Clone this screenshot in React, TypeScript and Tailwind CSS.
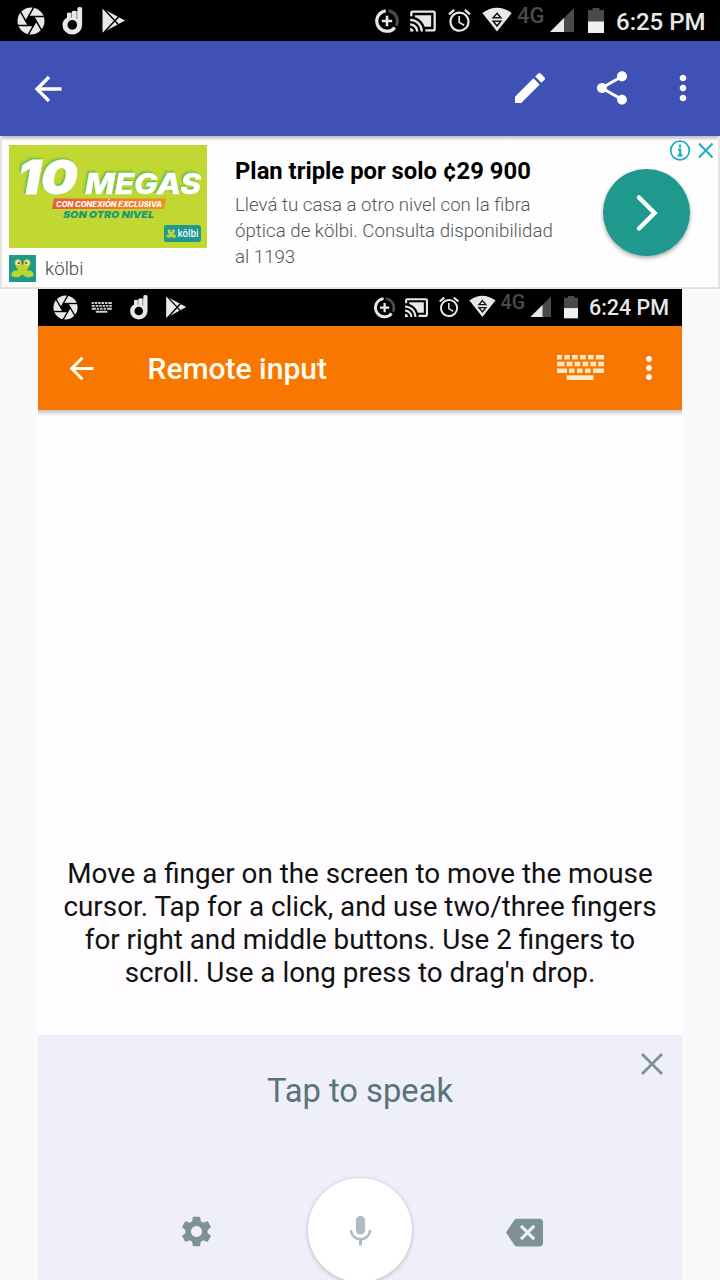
import React from "react";
import {
  MdAlarm,
  MdBackspace,
  MdCastConnected,
  MdEdit,
  MdMic,
  MdMoreVert,
  MdSettings,
  MdShare,
} from "react-icons/md";

const BLADE_ANGLES = [0, 60, 120, 180, 240, 300];

function ApertureIcon() {
  return (
    <svg width="28" height="28" viewBox="-14 -14 28 28">
      <circle r="13.500" fill="#e8e8e8" />
      <path d="M-2.600 -4.500H2.600L5.200 0L2.600 4.500H-2.600L-5.200 0Z" fill="#000" />
      {BLADE_ANGLES.map((angle) => (
        <path key={angle} d="M-2.600 -4.500H14" stroke="#000" strokeWidth="1.500" transform={`rotate(${angle})`} />
      ))}
    </svg>
  );
}

function HandIcon() {
  return (
    <svg width="28" height="28" viewBox="0 0 28 28">
      <path
        d="M4.500 18A9.800 9.500 0 0 0 24.100 18V0.800Q21.700 -0.600 19.400 0.800V4.500Q16 2.800 13.800 4.500V6Q11 4.800 9 6V10.500Q4.500 13 4.500 18Z"
        fill="#e8e8e8"
      />
      <path d="M13.500 6V11M18.800 4V12" stroke="#8a8a8a" strokeWidth="1.100" />
      <circle cx="14.300" cy="17.900" r="4.800" fill="#000" />
    </svg>
  );
}

function PlayIcon() {
  return (
    <svg width="28" height="28" viewBox="0 0 28 28">
      <path d="M3.5 1.500L26 13.500L3.5 25.800Z" fill="#e8e8e8" />
      <path d="M4 1L19.8 18M4 26.5L19.8 9.5" stroke="#000" strokeWidth="1.5" />
    </svg>
  );
}

function KeyboardIcon({ width, height, color }: { width: number; height: number; color: string }) {
  return (
    <svg width={width} height={height} viewBox="0 0 47 25" fill={color}>
      <path d="M0 0h5v4.6H0zM7.3 0h5.6v4.6H7.3zM15 0h5.8v4.6H15zM23 0h5.8v4.6H23zM31 0h5.6v4.6H31zM38.8 0H47v4.6h-8.2z" />
      <path d="M0 6.8h7.5v4.5H0zM9.6 6.8h5.8v4.5H9.6zM17.5 6.8h5.8v4.5h-5.8zM25.5 6.8h5.8v4.5h-5.8zM33.4 6.8h5.8v4.5h-5.8zM41.3 6.8H47v4.5h-5.7z" />
      <path d="M0 13.5h10v4.5H0zM12 13.5h5.5v4.5H12zM20 13.5h5.5v4.5H20zM28 13.5h5.5v4.5H28zM36 13.5h11v4.5H36zM9.6 20.3h27v4.7h-27z" />
    </svg>
  );
}

function DataSaverIcon() {
  return (
    <svg width="26" height="26" viewBox="0 0 26 26" fill="none">
      <path d="M14.5 2.9A10.2 10.2 0 0 1 22.2 17.6" stroke="#4a4a4a" strokeWidth="3.2" />
      <path d="M11.8 2.9A10.2 10.2 0 1 0 20.8 19.6" stroke="#e8e8e8" strokeWidth="3.2" />
      <path d="M13 7.8v10.4M7.8 13h10.4" stroke="#e8e8e8" strokeWidth="2.6" />
    </svg>
  );
}

function WifiIcon() {
  return (
    <svg width="30" height="26" viewBox="0 0 30 26">
      <path d="M0.3 6Q15 -4.5 29.7 6L15 24.5Z" fill="#e8e8e8" />
      <path d="M15 6.3l3.8 4.4h-7.6zM15 19l3.8-4.8h-7.6z" fill="none" stroke="#111" strokeWidth="1.5" />
    </svg>
  );
}

function SignalIcon() {
  return (
    <svg width="24" height="24" viewBox="0 0 24 24">
      <path d="M24 0V24H0Z" fill="#4a4a4a" />
      <path d="M14 10V24H0Z" fill="#e8e8e8" />
    </svg>
  );
}

function BatteryIcon() {
  return (
    <svg width="16" height="25" viewBox="0 0 16 25">
      <path d="M4.5 0h7v2H16v12H0V2h4.5z" fill="#4a4a4a" />
      <path d="M0 13.5h16V25H0z" fill="#f0f0f0" />
    </svg>
  );
}

function Slot({ children }: { children: React.ReactNode }) {
  return <div className="flex w-[41px] justify-center">{children}</div>;
}

function StatusBar({ time, keyboard = false }: { time: string; keyboard?: boolean }) {
  return (
    <div className="flex h-[41px] w-[720px] shrink-0 items-center bg-black pr-[14px] pl-[10px] text-[#e8e8e8]">
      <Slot>
        <ApertureIcon />
      </Slot>
      {keyboard && (
        <Slot>
          <KeyboardIcon width={24} height={12} color="#d0d0d0" />
        </Slot>
      )}
      <Slot>
        <HandIcon />
      </Slot>
      <Slot>
        <PlayIcon />
      </Slot>
      <div className="ml-auto flex items-center">
        <DataSaverIcon />
        <MdCastConnected size={28} className="ml-[9px]" />
        <MdAlarm size={27} className="ml-[9px]" />
        <div className="ml-[9px] -mt-px">
          <WifiIcon />
        </div>
        <span className="-mt-[10px] ml-[5px] w-[29px] text-[22px] leading-none font-medium text-[#4a4a4a]">4G</span>
        <div className="ml-1 -mt-[2px]">
          <SignalIcon />
        </div>
        <div className="ml-[14px]">
          <BatteryIcon />
        </div>
        <span className="mt-[2px] ml-3 w-[90px] text-[24px] leading-none font-medium whitespace-nowrap">{time}</span>
      </div>
    </div>
  );
}

function BackArrow({ size }: { size: number }) {
  return (
    <svg width={size} height={size} viewBox="0 0 28 28" fill="none" stroke="currentColor" strokeWidth="3.3">
      <path d="M15 2L3 14L15 26M3 14H27.5" />
    </svg>
  );
}

function Frog() {
  return (
    <g>
      <path
        d="M13.500 19.500Q10.500 23 5.500 22Q1.500 21 2.500 18.500Q5 14.500 9.500 15.500Q6.500 12.500 6.500 8.500L13.500 9.500L20.500 8.500Q20.500 12.500 17.500 15.500Q22 14.500 24.500 18.500Q25.500 21 21.500 22Q16.500 23 13.500 19.500Z"
        fill="#bdd62f"
      />
      <circle cx="9" cy="7.700" r="2.900" fill="#f6ecd0" stroke="#bdd62f" strokeWidth="1.200" />
      <circle cx="18" cy="7.700" r="2.900" fill="#f6ecd0" stroke="#bdd62f" strokeWidth="1.200" />
      <circle cx="9.700" cy="7.900" r="1.200" fill="#c23a2c" />
      <circle cx="17.300" cy="7.900" r="1.200" fill="#c23a2c" />
    </g>
  );
}

function AdPicture() {
  return (
    <svg
      width="198"
      height="103"
      viewBox="0 0 198 103"
      fontFamily="Inter, 'Liberation Sans', sans-serif"
      fontWeight="900"
      fontStyle="italic"
    >
      <defs>
        <linearGradient id="banner">
          <stop offset="0" stopColor="#ee5a31" />
          <stop offset="1" stopColor="#f19122" />
        </linearGradient>
      </defs>
      <rect width="198" height="103" fill="#c1d833" />
      <g
        fill="#fff"
        stroke="#fff"
        className="[filter:drop-shadow(-1px_-1px_0_#6cbd45)_drop-shadow(-1px_-1px_1px_#8cc93f)]"
      >
        <text x="8.500" y="49" fontSize="47" strokeWidth="0.800" textLength="60" lengthAdjust="spacingAndGlyphs">
          10
        </text>
        <text
          x="76"
          y="49"
          fontSize="28.500"
          fontWeight="800"
          strokeWidth="0.400"
          textLength="116"
          lengthAdjust="spacingAndGlyphs"
        >
          MEGAS
        </text>
      </g>
      <path d="M45 53.500H157L155 64H43Z" fill="url(#banner)" />
      <text x="47" y="61.500" fontSize="7.500" fontWeight="800" textLength="106" lengthAdjust="spacingAndGlyphs" fill="#fff">
        CON CONEXIÓN EXCLUSIVA
      </text>
      <text x="54" y="72.500" fontSize="9.500" textLength="91" lengthAdjust="spacingAndGlyphs" fill="#1f9a74">
        SON OTRO NIVEL
      </text>
      <path d="M157 80H189Q192 80 192 83V95Q192 97 190 97H158Q155 97 155 95V82Q155 80 157 80Z" fill="#1f998d" />
      <g transform="translate(156 82.500) scale(0.460)">
        <Frog />
      </g>
      <text
        x="168.500"
        y="92"
        fontSize="10"
        fontFamily="'Open Sans', sans-serif"
        fontWeight="600"
        fontStyle="normal"
        fill="#fff"
        textLength="21"
        lengthAdjust="spacingAndGlyphs"
      >
        kölbi
      </text>
    </svg>
  );
}

function Ad() {
  return (
    <div className="flex h-[153px] shrink-0 border-r-2 border-b-2 border-l-2 border-[#e4e4e4] bg-linear-to-b from-[#bcbcc4] to-[#fefefe] to-[5px]">
      <div className="w-[232px] pt-[9px] pl-[7px]">
        <AdPicture />
        <div className="mt-[7px] flex items-center">
          <svg width="27" height="27" viewBox="0 0 27 27">
            <rect width="27" height="27" fill="#1f998d" />
            <Frog />
          </svg>
          <span className="mt-[2px] ml-[9px] text-[18.700px] leading-none font-light text-[#444]">kölbi</span>
        </div>
      </div>
      <div className="w-[349px] pt-[21px] pl-px whitespace-nowrap">
        <div className="text-[23.800px] leading-[28px] font-bold text-black">Plan triple por solo ¢29 900</div>
        <div className="mt-[7px] text-[18.700px] leading-[26px] font-light text-[#555]">
          Llevá tu casa a otro nivel con la fibra
          <br />
          óptica de kölbi. Consulta disponibilidad
          <br />
          al 1193
        </div>
      </div>
      <div className="flex flex-1 flex-col">
        <svg width="48" height="22" viewBox="0 0 48 22" className="mt-1 mr-[2px] self-end" fill="none" stroke="#20aac4">
          <circle cx="12" cy="10.500" r="9.300" strokeWidth="1.700" />
          <path d="M12 4.500v3M10 9.500H12.200V16M9.700 15.300H14.500" strokeWidth="2.200" />
          <path d="M31 3.500L44.500 17.500M44.500 3.500L31 17.500" strokeWidth="2" />
        </svg>
        <div className="mt-[7px] ml-5 flex size-[87px] items-center justify-center rounded-full bg-[#1f998d] shadow-[0_2px_4px_rgba(0,0,0,0.35)]">
          <svg
            width="28"
            height="38"
            viewBox="0 0 28 38"
            fill="none"
            stroke="#fff"
            strokeWidth="4.500"
            strokeLinecap="round"
          >
            <path d="M6 3.500L21.500 19L6 34.500" />
          </svg>
        </div>
      </div>
    </div>
  );
}

export default function App() {
  return (
    <div className="flex h-[1280px] w-[720px] flex-col overflow-hidden bg-[#fafafa] font-['Roboto','Liberation_Sans',sans-serif]">
      <StatusBar time="6:25 PM" />
      <header className="flex h-[95px] shrink-0 items-center bg-[#3f51b5] pr-[17px] pl-[34px] text-white">
        <BackArrow size={28} />
        <MdEdit size={40} className="-mt-px ml-auto" />
        <MdShare size={40} className="-mt-px ml-[42px]" />
        <MdMoreVert size={40} className="-mt-px ml-[31px]" />
      </header>
      <Ad />
      <main className="mx-auto flex w-[644px] flex-1 flex-col bg-[#fefcff]">
        <div className="h-[37px] shrink-0 overflow-hidden bg-black">
          <div className="[zoom:0.8944]">
            <StatusBar time="6:24 PM" keyboard />
          </div>
        </div>
        <div className="flex h-[84px] shrink-0 items-center bg-[#f87700] pr-[15px] pl-[31px] text-[#fffdf0]">
          <BackArrow size={25} />
          <span className="mt-[2px] ml-[53.500px] text-[30px] leading-none font-medium">Remote input</span>
          <div className="-mt-px ml-auto">
            <KeyboardIcon width={47} height={25} color="#ffe6c4" />
          </div>
          <MdMoreVert size={36} className="ml-[27px]" />
        </div>
        <div className="flex flex-1 items-end justify-center bg-linear-to-b from-[#c4c2c2] to-[#fefcff] to-[6px] pb-[46px]">
          <p className="text-center text-[27.800px] leading-[33px] whitespace-nowrap text-[#111]">
            Move a finger on the screen to move the mouse
            <br />
            cursor. Tap for a click, and use two/three fingers
            <br />
            for right and middle buttons. Use 2 fingers to
            <br />
            scroll. Use a long press to drag'n drop.
          </p>
        </div>
        <div className="flex h-[245px] shrink-0 flex-col bg-[#eeeff8] text-[#7e9194]">
          <div className="flex h-[143px] shrink-0 items-start">
            <div className="w-[80px]" />
            <div className="flex-1 pt-[36px] text-center text-[32.700px] leading-[40px] text-[#5a727b]">Tap to speak</div>
            <div className="w-[80px] pt-[18px] pl-[39px]">
              <svg width="22" height="22" viewBox="0 0 22 22" stroke="currentColor" strokeWidth="2.800">
                <path d="M1 1L21 21M21 1L1 21" />
              </svg>
            </div>
          </div>
          <div className="flex h-[104px] shrink-0 items-center pl-[140px]">
            <MdSettings size={37} className="mt-[3px]" />
            <div className="ml-[93px] flex size-[104px] items-center justify-center rounded-full bg-white text-[#afbcc4] shadow-[0_1px_4px_rgba(0,0,0,0.25)]">
              <MdMic size={37} className="mt-[3px]" />
            </div>
            <MdBackspace size={37} className="mt-[4px] ml-[94px]" />
          </div>
        </div>
      </main>
    </div>
  );
}
